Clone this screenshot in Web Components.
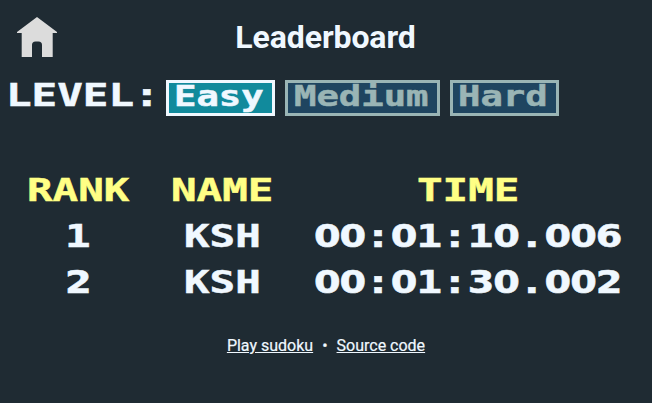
<!DOCTYPE html>
<html lang="en">
<head>
<meta charset="utf-8">
<title>Leaderboard</title>
<style>
html, body { margin: 0; background: #1f2b33; }
</style>
</head>
<body>
<leader-page></leader-page>
<script>
const define = (name, html, setup) => customElements.define(name, class extends HTMLElement {
  constructor() {
    super();
    this.attachShadow({ mode: 'open' }).innerHTML = html;
  }
  connectedCallback() { if (setup) setup(this); }
});

// Wide monospace lettering: every character takes 0.8 of --size.
define('wide-text', `
<style>
:host { display: block; width: calc(var(--n) * var(--size, 32px) * .8); height: var(--size, 32px); flex: none; }
span.line { display: block; width: max-content; white-space: pre; transform: scaleX(1.35); transform-origin: 0 0;
  font: bold calc(var(--size, 32px) * .985)/var(--size, 32px) "DejaVu Sans Mono", monospace;
  margin-left: -1.5px; -webkit-text-stroke: .5px currentColor; }
.d { font-family: "DejaVu Sans Condensed", "DejaVu Sans", sans-serif; font-stretch: semi-condensed; letter-spacing: -.0241em; }
</style><span class="line"></span>`, el => {
  const text = el.getAttribute('text');
  el.style.setProperty('--n', text.length);
  el.shadowRoot.querySelector('.line').innerHTML = text.replace(/[02-9]+/g, '<span class="d">$&</span>');
});

define('home-icon', `
<style>:host { display: block; width: 40px; height: 40px; } svg { display: block; }</style>
<svg width="40" height="40" viewBox="0 0 40 40"><path fill="#dcdcdc" d="M20 0L40 15V16H35.7V40H25V28Q25 24.5 21.5 24.5H18.5Q15 24.5 15 28V40H4.7V16H0V15Z"/></svg>`);

define('level-button', `
<style>
:host { display: block; box-sizing: border-box; height: 36px; padding: 0 7px; border: 3px solid #9ab5b5; background: #1f4560; color: #9ab5b5; --size: 28px; }
:host([selected]) { background: #118a9c; color: #f0f8ff; border-color: #f0f8ff; }
</style>`, el => {
  const t = document.createElement('wide-text');
  t.setAttribute('text', el.getAttribute('label'));
  el.shadowRoot.append(t);
});

define('score-table', `
<style>
:host { display: grid; grid-template-columns: 144.5px 144.5px 347px; grid-auto-rows: 46px; align-items: center; justify-items: center; }
.h { color: #ffff85; }
</style>
<wide-text class="h" text="RANK"></wide-text><wide-text class="h" text="NAME"></wide-text><wide-text class="h" text="TIME"></wide-text>
<wide-text text="1"></wide-text><wide-text text="KSH"></wide-text><wide-text text="00:01:10.006"></wide-text>
<wide-text text="2"></wide-text><wide-text text="KSH"></wide-text><wide-text text="00:01:30.002"></wide-text>`);

define('leader-page', `
<style>
:host { display: block; box-sizing: border-box; width: 652px; height: 403px; overflow: hidden; background: #1f2b33; color: #f0f8ff; font-family: Roboto, sans-serif; }
header { display: grid; grid-template-columns: 57px 1fr 57px; height: 74px; align-items: center; }
home-icon { margin-left: 17px; }
h1 { margin: 0 1px 0 0; text-align: center; font-size: 32px; line-height: 38px; font-weight: 700; letter-spacing: -.1px; }
.levels { display: flex; gap: 10px; padding: 6px 0 0 7.5px; height: 36px; }
.levels > wide-text { margin: -1px -5.5px 0 0; }
score-table { margin: 51px 0 0 7px; }
footer { display: flex; justify-content: center; gap: 9px; margin-top: 31px; font-size: 16px; line-height: 20px; font-weight: 400; -webkit-text-stroke: .2px currentColor; }
a { color: inherit; text-decoration: underline; }
</style>
<header><home-icon></home-icon><h1>Leaderboard</h1></header>
<div class="levels"><wide-text text="LEVEL:"></wide-text><level-button label="Easy" selected></level-button><level-button label="Medium"></level-button><level-button label="Hard"></level-button></div>
<score-table></score-table>
<footer><a href="#">Play sudoku</a><span>•</span><a href="#">Source code</a></footer>`);
</script>
</body>
</html>
